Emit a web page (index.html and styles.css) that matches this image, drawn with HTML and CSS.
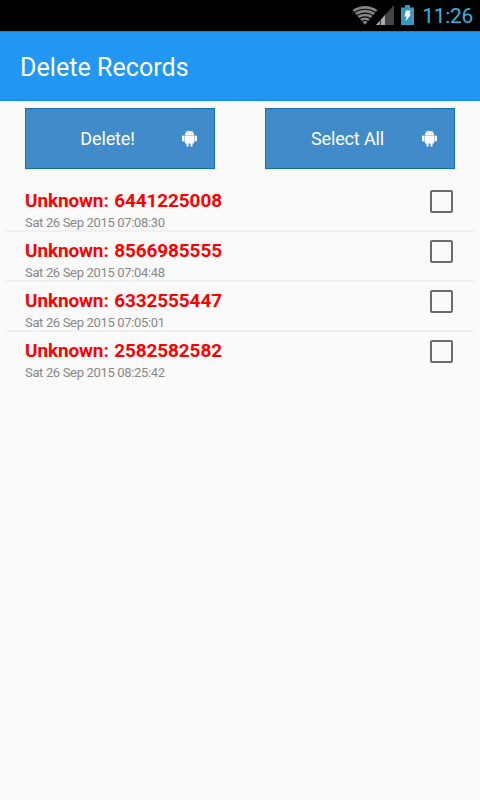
FILE: index.html
```html
<!DOCTYPE html>
<html lang="en">
  <head>
    <meta charset="UTF-8" />
    <meta name="viewport" content="width=device-width, initial-scale=1.0" />
    <title>Delete Records</title>
    <link rel="stylesheet" href="styles.css">
  </head>
  <body>
    <svg class="sprite" aria-hidden="true">
      <symbol id="android" viewBox="0 0 15 17">
        <path d="M2.800 5.300C2.800 3.500 3.700 2.300 5 1.600L4.400.4l.3-.2.8 1.200a5.300 5.300 0 0 1 4 0L10.300.2l.3.2-.6 1.200C11.300 2.300 12.200 3.500 12.200 5.300z" />
        <path d="M2.800 5.600h9.400v6.900a1 1 0 0 1-1 1h-.7v2.300a1 1 0 0 1-2 0v-2.300h-2v2.300a1 1 0 0 1-2 0v-2.300h-.7a1 1 0 0 1-1-1z" />
        <rect x="0" y="5.500" width="2.500" height="6" rx="1.100" />
        <rect x="12.500" y="5.500" width="2.500" height="6" rx="1.100" />
        <circle class="eye" cx="5.500" cy="3.600" r="0.300" />
        <circle class="eye" cx="9.500" cy="3.600" r="0.300" />
      </symbol>
    </svg>

    <div class="status-bar">
      <svg class="wifi" viewBox="0 0 26 20" width="26" height="20">
        <path class="wifi-fan" d="M13 19.800L.500 5Q13-3 25.500 5z" />
        <path class="wifi-gap" d="M2 7.500Q13 1 24 7.500M4.600 10.600Q13 5.600 21.400 10.600M7.200 13.700Q13 10 18.800 13.700M9.600 16.600Q13 14.500 16.400 16.600" />
      </svg>
      <svg class="signal" viewBox="0 0 18 20" width="18" height="20">
        <path class="signal-empty" d="M0 20L18 0v20z" />
        <path class="signal-full" d="M0 20L9 10V20z" />
        <path class="signal-gap" d="M4.300 14v6" />
      </svg>
      <svg class="battery" viewBox="0 0 13 20" width="13" height="20">
        <path class="battery-body" d="M0 2.500h4V0h5v2.500h4V20H0z" />
        <path class="battery-bolt" d="M5 5.500h4.500L8.300 9.300H10L4.500 16.500l1.200-5H3.500z" />
      </svg>
      <span class="clock">11:26</span>
    </div>

    <header class="app-bar">
      <h1>Delete Records</h1>
    </header>

    <div class="actions">
      <button class="btn">
        <span class="btn-label">Delete!</span>
        <svg class="btn-icon"><use href="#android" /></svg>
      </button>
      <button class="btn">
        <span class="btn-label">Select All</span>
        <svg class="btn-icon"><use href="#android" /></svg>
      </button>
    </div>

    <ul class="records">
      <li class="record">
        <div>
          <div class="number">Unknown: 6441225008</div>
          <div class="date">Sat 26 Sep 2015 07:08:30</div>
        </div>
        <input type="checkbox" class="check" />
      </li>
      <li class="record">
        <div>
          <div class="number">Unknown: 8566985555</div>
          <div class="date">Sat 26 Sep 2015 07:04:48</div>
        </div>
        <input type="checkbox" class="check" />
      </li>
      <li class="record">
        <div>
          <div class="number">Unknown: 6332555447</div>
          <div class="date">Sat 26 Sep 2015 07:05:01</div>
        </div>
        <input type="checkbox" class="check" />
      </li>
      <li class="record">
        <div>
          <div class="number">Unknown: 2582582582</div>
          <div class="date">Sat 26 Sep 2015 08:25:42</div>
        </div>
        <input type="checkbox" class="check" />
      </li>
    </ul>
  </body>
</html>
```

FILE: styles.css
```css
:root {
  --primary: #2196f3;
  --button: #428bca;
  --button-border: #106eb5;
  --holo-blue: #33b5e5;
  --surface: #fafafa;
}

* {
  box-sizing: border-box;
}

body {
  margin: 0;
  min-height: 100vh;
  font-family: Roboto, "Liberation Sans", sans-serif;
  background-color: var(--surface);
}

.sprite {
  display: none;
}

/* Status bar */
.status-bar {
  display: flex;
  align-items: flex-start;
  justify-content: flex-end;
  height: 31px;
  padding: 5px 7px 0 0;
  background-color: #000;
}

.wifi-fan {
  fill: #858585;
}

.wifi-gap {
  fill: none;
  stroke: #000;
  stroke-width: 1.1;
}

.signal {
  margin-left: -2px;
}

.signal-empty {
  fill: #444;
}

.signal-full {
  fill: #aaa;
}

.signal-gap {
  stroke: #000;
  stroke-width: 0.8;
}

.battery {
  margin-left: 7px;
}

.battery-body {
  fill: #3598bd;
}

.battery-bolt {
  fill: #fff;
}

.clock {
  margin-left: 8px;
  font-size: 21px;
  line-height: 23px;
  letter-spacing: -0.3px;
  color: var(--holo-blue);
}

/* Title bar */
.app-bar {
  display: flex;
  align-items: center;
  height: 70px;
  padding: 3px 20px 0;
  background-color: var(--primary);
  border-top: 1px solid #1c7fce;
  border-bottom: 1px solid #0a8bf0;
}

h1 {
  margin: 0;
  font-size: 25px;
  font-weight: 400;
  letter-spacing: 0.05px;
  color: #fff;
}

/* Buttons */
.actions {
  display: flex;
  justify-content: space-between;
  padding: 7px 25px 0;
}

.btn {
  display: flex;
  align-items: center;
  width: 190px;
  height: 61px;
  padding: 0 17px 0 0;
  border: 1px solid var(--button-border);
  background-color: var(--button);
  color: #fff;
  font-family: inherit;
  font-size: 18px;
  letter-spacing: -0.15px;
}

.btn-label {
  flex: 1;
  padding-left: 7px;
  text-align: center;
}

.btn-icon {
  width: 15px;
  height: 17px;
  fill: #fff;
}

.eye {
  fill: var(--button);
}

/* Record list */
.records {
  margin: 12px 6px 0;
  padding: 0;
  list-style: none;
}

.record {
  display: flex;
  align-items: flex-start;
  justify-content: space-between;
  height: 50px;
  padding: 8px 21px 0 19px;
  border-bottom: 2px solid #f0f0f0;
}

.record:first-child {
  height: 51px;
  padding-top: 9px;
}

.record:last-child {
  border-bottom: none;
}

.number {
  font-size: 19px;
  font-weight: 700;
  line-height: 21px;
  letter-spacing: -0.13px;
  word-spacing: 1px;
  color: #f00;
}

.date {
  font-size: 13px;
  line-height: 24px;
  letter-spacing: -0.34px;
  color: #888;
}

.check {
  appearance: none;
  width: 23px;
  height: 23px;
  margin: 0;
  border: 2px solid #6b6b6b;
  border-radius: 2px;
}
```
